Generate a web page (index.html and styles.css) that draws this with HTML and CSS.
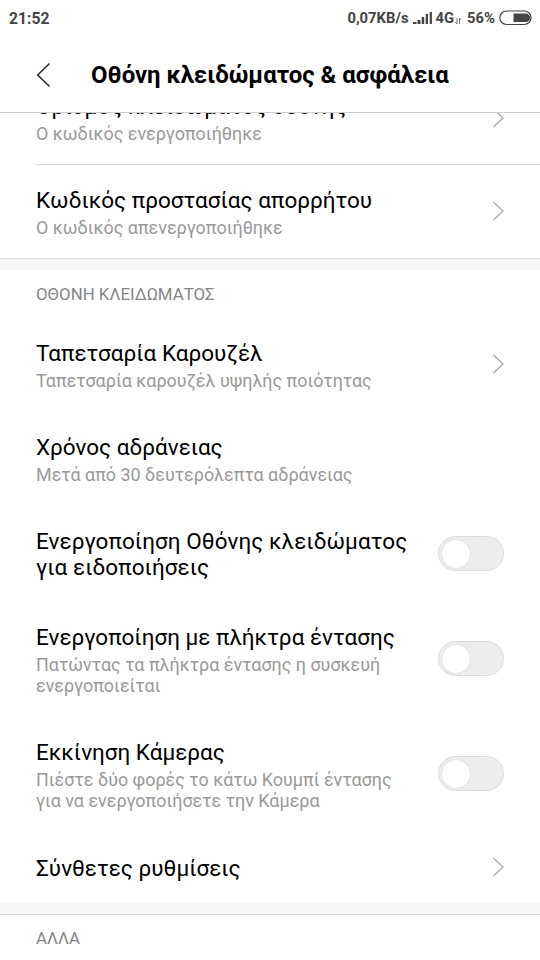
FILE: index.html
```
<!DOCTYPE html>
<html lang="el">
<head>
<meta charset="utf-8">
<title>Οθόνη κλειδώματος &amp; ασφάλεια</title>
<link rel="stylesheet" href="styles.css">
</head>
<body>
<div class="status">
  <span class="clock">21:52</span>
  <span class="speed">0,07KB/s</span>
  <svg class="signal" width="20" height="14" viewBox="0 0 20 14"><path d="M0 13v-2h3.500v2zM4.500 13v-4h3v4zM8.700 13v-7h2.500v7zM12.700 13v-10h2.300v10zM16.700 13v-12h2.200v12z" fill="#444"/></svg>
  <span class="net">4G</span>
  <svg class="updown" width="7" height="8" viewBox="0 0 7 8"><path d="M2 1v6L.3 5.200M4.500 7V1l1.700 1.800" fill="none" stroke="#777" stroke-width="1"/></svg>
  <span class="percent">56%</span>
  <svg class="battery" width="34" height="16" viewBox="0 0 34 16"><rect x=".8" y="1" width="31.200" height="13.500" rx="6.750" fill="#fff" stroke="#444" stroke-width="1.200"/><path d="M14.500 3.500h12.300a4.300 4.300 0 0 1 0 8.600H14.500z" fill="#444"/></svg>
</div>
<header class="header">
  <svg class="back" width="16" height="26" viewBox="0 0 16 26"><path d="M13.500 1.500 1.700 13l11.800 11.500" fill="none" stroke="#333" stroke-width="1.600"/></svg>
  <h1><span>Οθόνη κλειδώματος &amp; ασφάλεια</span></h1>
</header>
<main class="content">
  <div class="row first">
    <div class="text"><div class="title"><span>Ορισμός κλειδώματος οθόνης</span></div><div class="sub"><span>Ο κωδικός ενεργοποιήθηκε</span></div></div>
    <svg class="chevron" width="12" height="20" viewBox="0 0 12 20"><path d="m1.500 1 9.500 9-9.500 9" fill="none" stroke="#aaa" stroke-width="1.300"/></svg>
  </div>
  <div class="row privacy">
    <div class="text"><div class="title"><span>Κωδικός προστασίας απορρήτου</span></div><div class="sub"><span>Ο κωδικός απενεργοποιήθηκε</span></div></div>
    <svg class="chevron" width="12" height="20" viewBox="0 0 12 20"><path d="m1.500 1 9.500 9-9.500 9" fill="none" stroke="#aaa" stroke-width="1.300"/></svg>
  </div>
  <div class="gap top"></div>
  <h2><span>ΟΘΟΝΗ ΚΛΕΙΔΩΜΑΤΟΣ</span></h2>
  <div class="row">
    <div class="text"><div class="title"><span>Ταπετσαρία Καρουζέλ</span></div><div class="sub"><span>Ταπετσαρία καρουζέλ υψηλής ποιότητας</span></div></div>
    <svg class="chevron" width="12" height="20" viewBox="0 0 12 20"><path d="m1.500 1 9.500 9-9.500 9" fill="none" stroke="#aaa" stroke-width="1.300"/></svg>
  </div>
  <div class="row">
    <div class="text"><div class="title"><span>Χρόνος αδράνειας</span></div><div class="sub"><span>Μετά από 30 δευτερόλεπτα αδράνειας</span></div></div>
  </div>
  <div class="row notify">
    <div class="text"><div class="title"><span>Ενεργοποίηση Οθόνης κλειδώματος</span><br><span>για ειδοποιήσεις</span></div></div>
    <div class="toggle"></div>
  </div>
  <div class="row tall">
    <div class="text"><div class="title"><span>Ενεργοποίηση με πλήκτρα έντασης</span></div><div class="sub"><span>Πατώντας τα πλήκτρα έντασης η συσκευή</span><br><span>ενεργοποιείται</span></div></div>
    <div class="toggle"></div>
  </div>
  <div class="row tall">
    <div class="text"><div class="title"><span>Εκκίνηση Κάμερας</span></div><div class="sub"><span>Πιέστε δύο φορές το κάτω Κουμπί έντασης</span><br><span>για να ενεργοποιήσετε την Κάμερα</span></div></div>
    <div class="toggle"></div>
  </div>
  <div class="row advanced">
    <div class="text"><div class="title"><span>Σύνθετες ρυθμίσεις</span></div></div>
    <svg class="chevron" width="12" height="20" viewBox="0 0 12 20"><path d="m1.500 1 9.500 9-9.500 9" fill="none" stroke="#aaa" stroke-width="1.300"/></svg>
  </div>
  <div class="gap bottom"></div>
  <h2 class="other"><span>ΑΛΛΑ</span></h2>
</main>
</body>
</html>
```
FILE: styles.css
```
* { box-sizing: border-box; }
body {
  margin: 0;
  width: 540px;
  height: 960px;
  overflow: hidden;
  display: flex;
  flex-direction: column;
  background: #fff;
  color: #000;
  font-family: Roboto, "Noto Sans", sans-serif;
}
svg { display: block; flex: none; }
.status {
  flex: none;
  height: 36px;
  padding: 0 7px 0 9px;
  display: flex;
  align-items: center;
  font-size: 14.8px;
  font-weight: 700;
  color: #444;
  white-space: nowrap;
}
.clock { margin-right: auto; font-size: 15.7px; }
.signal { margin-left: 4px; }
.net { margin-left: 3px; }
.updown { margin: 6px 5px 0 1px; }
.battery { margin-left: 4px; }
.header {
  flex: none;
  height: 77px;
  padding: 2px 0 0 36px;
  display: flex;
  align-items: center;
  border-bottom: 1px solid #d0d0d0;
}
h1 {
  margin: 0 0 0 39px;
  font-size: 23.95px;
  line-height: 30px;
  font-weight: 700;
  white-space: nowrap;
}
.content {
  flex: 1;
  min-height: 0;
  overflow: hidden;
}
.row {
  height: 94px;
  padding: 23px 36px 0;
  display: flex;
  justify-content: space-between;
}
.text { white-space: nowrap; }
.title { font-size: 22.5px; line-height: 26px; }
.sub { margin-top: 4px; font-size: 17.93px; line-height: 21px; color: #999; }
.chevron { margin-top: 14px; }
.first {
  margin: -42px 0 0 36px;
  padding: 22px 36px 0 0;
  border-bottom: 1px solid #d8d8d8;
}
.first .title { letter-spacing: .08px; }
.first .chevron { margin-top: 15px; }
.privacy { height: 93px; padding-top: 22px; }
.gap { height: 12px; background: #f6f6f6; }
.top { border-top: 1px solid #dedede; }
.bottom { border-bottom: 1px solid #d8d8d8; }
h2 {
  height: 47px;
  margin: 0;
  padding-left: 36px;
  font-size: 16.85px;
  line-height: 48px;
  font-weight: 400;
  color: #858585;
}
.other { line-height: 46px; }
.notify { height: 96px; }
.notify .title { letter-spacing: .06px; }
.tall { height: 115px; }
.advanced { height: 72px; padding-top: 24px; }
.advanced .chevron { margin-top: 2px; }
.toggle {
  width: 66px;
  height: 35px;
  padding: 2.5px;
  border: 1px solid #dcdcdc;
  border-radius: 18px;
  background: #ededed;
  margin-top: 8px;
}
.tall .toggle { margin-top: 17px; }
.toggle::before {
  content: "";
  display: block;
  width: 28px;
  height: 28px;
  border-radius: 50%;
  background: #fff;
  box-shadow: 0 0 1px #bbb;
}
```
